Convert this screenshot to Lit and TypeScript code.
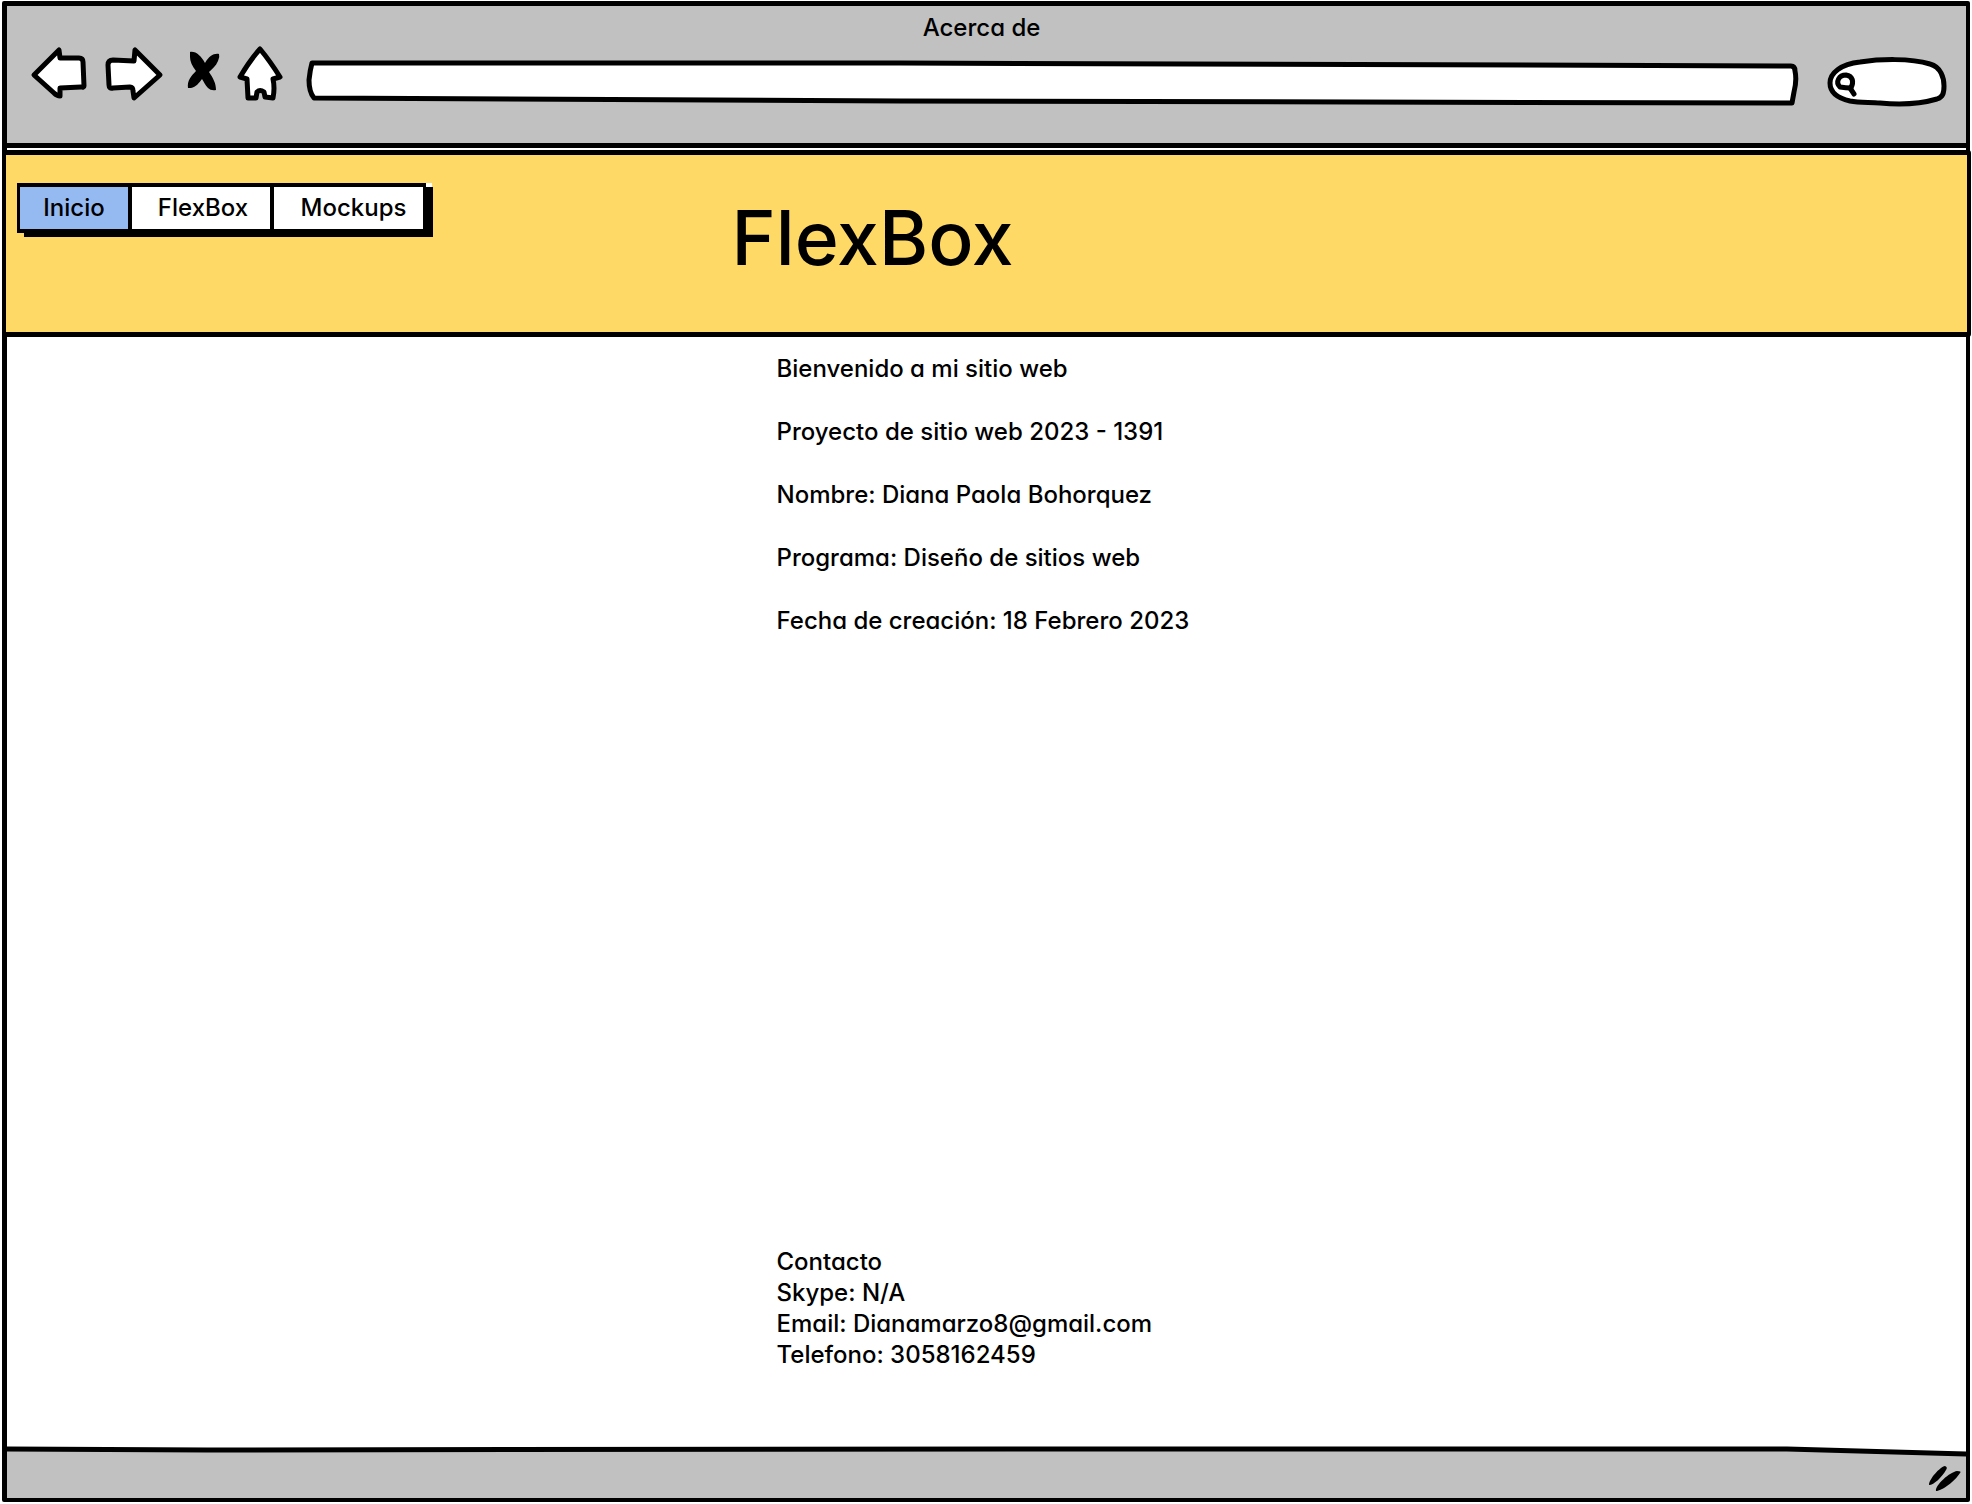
import { LitElement, html, css, svg } from "lit";
import { customElement } from "lit/decorators.js";

const about = [
  "Bienvenido a mi sitio web",
  "Proyecto de sitio web 2023 - 1391",
  "Nombre: Diana Paola Bohorquez",
  "Programa: Diseño de sitios web",
  "Fecha de creación: 18 Febrero 2023",
];

const contact = ["Contacto", "Skype: N/A", "Email: Dianamarzo8@gmail.com", "Telefono: 3058162459"];

const controls = [
  {
    label: "Atrás",
    box: "30 44 60 64",
    width: 60,
    shape: svg`<path class="outline" d="M34 75 L59 50 L60 58 L79 58 Q83 58 83 62 L84 86 Q84 88 81 87 L60 88 L60 96 Q57 96 54 93 Z"/>`,
  },
  {
    label: "Adelante",
    box: "104 44 60 64",
    width: 60,
    shape: svg`<path class="outline" d="M160 75 L135 50 L134 61 L113 60 Q108 60 108 65 L109 85 Q109 89 113 88 L130 87 Q133 87 133 91 L134 98 Z"/>`,
  },
  {
    label: "Detener",
    box: "178 44 44 64",
    width: 44,
    shape: svg`<path d="M190 52 C196 51 201 56 205 63 C209 56 214 53 219 54 Q220 57 218 61 C216 66 212 69 209 72 C213 78 216 83 216 90 Q211 91 208 88 C205 85 204 82 202 79 C199 83 196 87 191 88 L188 88 C187 81 191 76 196 71 C192 66 190 61 190 57 Z"/>`,
  },
  {
    label: "Página principal",
    box: "236 44 48 64",
    width: 48,
    shape: svg`<path class="outline" d="M260 49 Q270 61 280 77 L273 79 Q275 88 273 98 L265 97 L264 92 Q260 89 257 92 L256 98 L248 98 L247 79 L240 77 Q250 60 260 49 Z"/>`,
  },
];

@customElement("app-root")
export class AppRoot extends LitElement {
  static styles = css`
    :host {
      display: flex;
      box-sizing: border-box;
      min-height: 100vh;
      padding: 1px 2px 2px;
      background: #fff;
      color: #000;
      font: 500 24px/31px Inter, "Liberation Sans", sans-serif;
      font-feature-settings: "cv11";
    }
    * {
      box-sizing: border-box;
    }
    .window {
      flex: 1;
      display: flex;
      flex-direction: column;
      border: solid #000;
      border-width: 5px 4px 4px 5px;
      border-radius: 2px;
    }
    .chrome {
      height: 142px;
      padding: 6px 17px 0 23px;
      background: #c1c1c1;
      border-bottom: 5px solid #000;
    }
    .caption {
      padding-right: 16px;
      text-align: center;
    }
    .tools {
      display: flex;
      gap: 14px;
      margin-top: 1px;
    }
    button {
      padding: 0;
      border: 0;
      background: none;
      height: 64px;
    }
    svg {
      display: block;
    }
    .outline {
      fill: #fff;
      stroke: #000;
      stroke-width: 5;
      stroke-linejoin: round;
      stroke-linecap: round;
      vector-effect: non-scaling-stroke;
    }
    .open {
      fill: none;
    }
    .field {
      position: relative;
      height: 64px;
    }
    .address {
      flex: 1;
      margin: 0 11px 0 8px;
    }
    .search {
      width: 124px;
    }
    .sketch {
      position: absolute;
      inset: 0;
      width: 100%;
      height: 100%;
    }
    input {
      position: relative;
      width: 100%;
      height: 100%;
      padding: 10px 16px 0;
      border: 0;
      outline: 0;
      background: none;
      font: inherit;
    }
    .search input {
      padding: 10px 12px 0 36px;
    }
    .banner {
      display: grid;
      grid-template-columns: 37fr 63fr;
      align-items: start;
      height: 187px;
      margin: 2px -5px 0;
      border: solid #000;
      border-width: 5px 4px 5px;
      border-radius: 3px;
      background: #fed966;
    }
    .menu {
      display: grid;
      grid-template-columns: 108px 138px 149px;
      gap: 4px;
      justify-self: start;
      margin: 28px 0 0 11px;
      border: solid #000;
      border-width: 4px 3px;
      background: #000;
      box-shadow: 7px 4px #000, 6px 0 #fff;
    }
    .menu a {
      padding: 5px 0 6px;
      background: #fff;
      color: inherit;
      text-align: center;
      text-decoration: none;
    }
    .menu a.current {
      background: #95baf1;
    }
    .menu a:nth-child(2) {
      padding-left: 4px;
    }
    .menu a:last-child {
      padding-left: 10px;
    }
    h1 {
      margin: 38px 0 0;
      font-size: 75px;
      line-height: 90px;
      font-weight: 500;
    }
    main {
      flex: 1;
      display: flex;
      flex-direction: column;
      justify-content: space-between;
      width: 420px;
      margin: 0 auto;
      padding: 16px 0 76px;
      white-space: nowrap;
    }
    p {
      margin: 0;
    }
    .about {
      display: grid;
      gap: 32px;
    }
    address {
      font-style: normal;
    }
    footer {
      position: relative;
      display: flex;
      justify-content: flex-end;
      height: 52px;
      padding: 18px 4px 0;
    }
    .status {
      fill: #c1c1c1;
    }
    .grip {
      position: relative;
    }
  `;

  render() {
    return html`
      <div class="window">
        <header class="chrome">
          <div class="caption">Acerca de</div>
          <div class="tools">
            ${controls.map(
              (c) => html`<button aria-label=${c.label}>
                <svg viewBox=${c.box} width=${c.width} height="64">${c.shape}</svg>
              </button>`
            )}
            <div class="field address">
              <svg class="sketch" viewBox="306 44 1494 64" preserveAspectRatio="none">
                <path class="outline" d="M312 63 L900 63 L1791 66 Q1795 66 1795 71 Q1797 80 1794 92 L1792 103 L900 101 L314 98 Q309 92 309 80 Q310 70 312 63 Z"/>
              </svg>
              <input type="text" aria-label="Dirección" />
            </div>
            <div class="field search">
              <svg class="sketch" viewBox="1825 44 124 64" preserveAspectRatio="none">
                <path class="outline" d="M1830 83 C1830 73 1841 64 1860 62 C1880 59 1910 58 1930 64 C1941 67 1944 78 1944 86 C1944 93 1943 97 1937 99 C1920 104 1900 105 1880 103 C1870 102 1860 103 1850 101 C1837 98 1830 92 1830 83 Z"/>
                <path class="outline" d="M1840 87 C1835 82 1839 75 1846 75 C1853 76 1854 82 1851 88 Q1846 88 1840 87 Z"/>
                <path class="outline open" d="M1850 88 L1854 94"/>
              </svg>
              <input type="search" aria-label="Buscar" />
            </div>
          </div>
        </header>
        <div class="banner">
          <nav class="menu">
            <a class="current" href="#inicio">Inicio</a>
            <a href="#flexbox">FlexBox</a>
            <a href="#mockups">Mockups</a>
          </nav>
          <h1>FlexBox</h1>
        </div>
        <main>
          <section class="about">${about.map((t) => html`<p>${t}</p>`)}</section>
          <address>${contact.map((t) => html`<p>${t}</p>`)}</address>
        </main>
        <footer>
          <svg class="sketch" viewBox="0 0 1959 52" preserveAspectRatio="none">
            <path class="status" d="M0 3 L200 4 L1000 3 L1780 3 L1959 8 V52 H0 Z"/>
            <path class="outline open" d="M0 3 L200 4 L1000 3 L1780 3 L1959 8"/>
          </svg>
          <svg class="grip" viewBox="1928 1464 34 30" width="34" height="30">
            <path d="M1929 1485 C1929 1479 1940 1467 1945 1466 Q1948 1467 1946 1470 C1942 1477 1934 1485 1929 1485 Z"/>
            <path d="M1936 1491 C1935 1485 1950 1472 1957 1471 Q1962 1471 1960 1473 C1955 1481 1942 1491 1936 1491 Z"/>
          </svg>
        </footer>
      </div>
    `;
  }
}
